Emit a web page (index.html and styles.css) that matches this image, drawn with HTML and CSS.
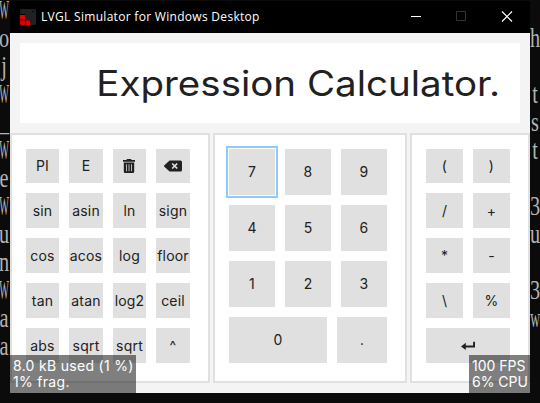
FILE: index.html
```html
<!DOCTYPE html>
<html lang="en">
<head>
<meta charset="utf-8">
<title>LVGL Simulator for Windows Desktop</title>
<link rel="stylesheet" href="styles.css">
</head>
<body>
<div class="desktop">
  <div class="console console-left"><span class="wide">W</span><span>o</span><span>j</span><span class="wide">W</span><span>_</span><span class="wide">W</span><span>e</span><span class="wide">W</span><span>u</span><span>n</span><span class="wide">W</span><span>a</span><span>a</span></div>
  <main class="window">
    <header class="titlebar">
      <svg class="app-icon" width="16" height="16" viewBox="0 0 16 16"><rect width="16" height="16" rx="1.5" fill="#1f2224"/><path d="M0 5h5v6h6v5H0z" fill="#000"/><path d="M0 6h5v4.500H0zM0 11.300h5V16H1a1 1 0 0 1-1-1zM6 11.300h4.500V16H6z" fill="#dc0404"/><circle cx="13" cy="2.500" r=".8" fill="#000"/></svg>
      <h1 class="title">LVGL Simulator for Windows Desktop</h1>
      <svg class="controls" width="114" height="32" viewBox="0 0 114 32" fill="none"><path d="M0 15.500h10" stroke="#fff"/><path d="M45.500 10.500h9v9h-9z" stroke="#333"/><path d="M91 10.500l10 10M101 10.500l-10 10" stroke="#fff" stroke-width="1.200"/></svg>
    </header>
    <section class="screen">
      <div class="display"><span>Expression Calculator.</span></div>
      <div class="panels">
        <div class="panel functions">
          <button>PI</button><button>E</button>
          <button class="icon" aria-label="Clear"><svg width="12" height="14" viewBox="0 0 12 14"><path fill="#212121" fill-rule="evenodd" d="M4 0h4l.6 1H12v1.700H0V1h3.400zM.8 3.500h10.400v9.200A1.300 1.300 0 0 1 9.900 14H2.100A1.300 1.300 0 0 1 .8 12.700zM3 5.200v7h.8v-7zm2.600 0v7h.8v-7zm2.600 0v7H9v-7z"/></svg></button>
          <button class="icon" aria-label="Delete"><svg width="18" height="12" viewBox="0 0 18 12"><path fill="#212121" d="M5.600.5h10.900A1.500 1.500 0 0 1 18 2v8a1.500 1.500 0 0 1-1.500 1.500H5.600L.4 6.700a1 1 0 0 1 0-1.400z"/><path d="M8.200 3.500l5 5M13.200 3.500l-5 5" stroke="#e0e0e0" stroke-width="1.700"/></svg></button>
          <button>sin</button><button>asin</button><button>ln</button><button>sign</button>
          <button>cos</button><button>acos</button><button>log</button><button>floor</button>
          <button>tan</button><button>atan</button><button>log2</button><button>ceil</button>
          <button>abs</button><button>sqrt</button><button>sqrt</button><button>^</button>
        </div>
        <div class="panel digits">
          <div class="row"><button class="focused">7</button><button>8</button><button>9</button></div>
          <div class="row"><button>4</button><button>5</button><button>6</button></div>
          <div class="row"><button>1</button><button>2</button><button>3</button></div>
          <div class="row last"><button>0</button><button>.</button></div>
        </div>
        <div class="panel operators">
          <button>(</button><button>)</button>
          <button>/</button><button>+</button>
          <button>*</button><button>-</button>
          <button>\</button><button>%</button>
          <button class="enter" aria-label="Enter"><svg width="14" height="10" viewBox="0 0 14 10"><path fill="#212121" d="M12.100.7H14v5.800H4.800v2.600L0 5.500l4.800-3.700v2.600h7.300z"/></svg></button>
        </div>
      </div>
      <div class="monitor memory">8.0 kB used (1 %)<br>1% frag.</div>
      <div class="monitor performance">100 FPS<br>6% CPU</div>
    </section>
  </main>
  <div class="console console-right"><span></span><span>h</span><span></span><span>t</span><span>s</span><span>t</span><span></span><span>3</span><span>u</span><span></span><span>3</span><span class="narrow">w</span><span></span></div>
</div>
</body>
</html>
```
FILE: styles.css
```css
* { box-sizing: border-box; }
body { margin: 0; background: #0b0b0b; }
.desktop {
  display: grid;
  grid-template-columns: 10px 520px 10px;
  height: 403px;
  padding-top: 1px;
  overflow: hidden;
}
.console {
  display: grid;
  grid-auto-rows: 28px;
  overflow: hidden;
  margin-top: -5px;
  font: 27px/28px "Liberation Serif", serif;
  color: #b4b4b4;
}
.console span {
  display: flex;
  justify-content: center;
  width: 10px;
  transform: scaleX(0.75);
}
.console-left span { margin-left: -1px; }
.console .wide { transform: scaleX(0.38); }
.console .narrow { transform: scaleX(0.5); }
.window { height: 392px; }
.titlebar {
  display: flex;
  align-items: center;
  height: 32px;
  padding: 0 5px 0 10px;
  background: #000;
}
.app-icon { margin-right: 5px; }
.title {
  flex: 1;
  margin: 0;
  font: 400 12px/16px "Open Sans", sans-serif;
  letter-spacing: 0.3px;
  color: #fff;
  white-space: nowrap;
}
.controls { flex: none; }
.screen {
  position: relative;
  height: 360px;
  padding-top: 10px;
  background: #f4f4f4;
  color: #212121;
  font-family: Inter, sans-serif;
}
.display {
  display: flex;
  align-items: center;
  justify-content: flex-end;
  height: 80px;
  margin: 0 10px 10px;
  padding-right: 20px;
  background: #fff;
  font-size: 35px;
  white-space: nowrap;
}
.display span {
  transform: scaleX(1.1);
  transform-origin: right center;
}
.panels {
  display: grid;
  grid-template-columns: 200px 194px 120px;
  gap: 3px;
  height: 250px;
}
.panel {
  padding: 14px;
  border: 2px solid #e0e0e0;
  background: #fff;
}
.functions, .operators {
  display: grid;
  gap: 10px;
  grid-template-rows: 34px repeat(4, 35px);
}
.functions { grid-template-columns: 33px 34px 33px 34px; }
.operators { grid-template-columns: 37px 37px; }
.digits { display: grid; grid-template-rows: repeat(4, 46px); gap: 10px; }
.row { display: grid; grid-template-columns: repeat(3, 46px); gap: 10px; }
.row.last { grid-template-columns: 98px 50px; }
button {
  display: flex;
  align-items: center;
  justify-content: center;
  min-width: 0;
  padding: 0;
  border: 0;
  background: #e0e0e0;
  color: #212121;
  font: 400 14px/16px Inter, sans-serif;
  letter-spacing: 0.2px;
  white-space: nowrap;
}
.icon { padding-right: 1px; }
.enter { grid-column: span 2; }
.focused { outline: 2px solid #90caf9; outline-offset: 1px; }
.monitor {
  position: absolute;
  bottom: 0;
  height: 38px;
  padding: 3px;
  background: rgba(0, 0, 0, 0.5);
  color: #fff;
  font-size: 14px;
  line-height: 16px;
  white-space: nowrap;
}
.memory { left: 0; width: 126px; letter-spacing: 0.3px; }
.performance { right: 0; width: 61px; }
```
